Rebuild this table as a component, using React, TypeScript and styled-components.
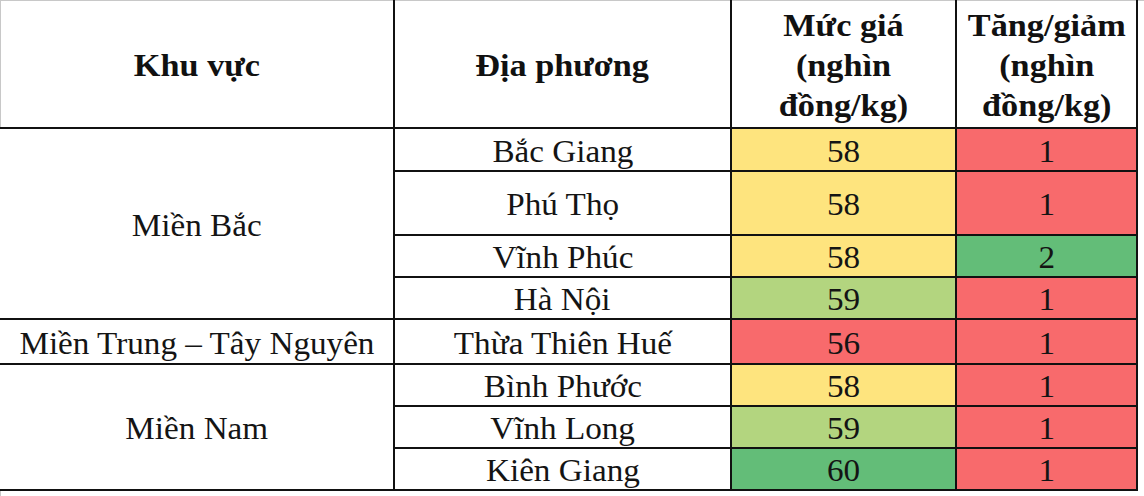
import React from "react";
import styled, { createGlobalStyle } from "styled-components";

const SERIF = `"Liberation Serif", "Times New Roman", "DejaVu Serif", serif`;

const Global = createGlobalStyle`
  html, body { margin: 0; padding: 0; background: #ffffff; }
  body { font-family: ${SERIF}; color: #111; }
`;

const Frame = styled.div`
  width: 1144px;
  height: 496px;
  background: #fff;
  box-sizing: border-box;
  border-top: 1px solid #c8c8c8;
  border-left: 1px solid #c8c8c8;
`;

const Table = styled.table`
  width: 1137px;
  border-collapse: collapse;
  table-layout: fixed;
  margin-top: -1px;
  margin-left: -1px;
  font-family: ${SERIF};
`;

const Head = styled.th<{ $first?: boolean }>`
  border: 2px solid #111;
  border-top: none;
  border-left: ${p => (p.$first ? "none" : "2px solid #111")};
  font-family: ${SERIF};
  font-weight: 700;
  font-size: 32px;
  line-height: 40px;
  text-align: center;
  vertical-align: middle;
  padding: 2px 0 0 0;
  height: 125px;
  color: #111;
`;

const Cell = styled.td<{ $bg?: string; $first?: boolean; $h?: number }>`
  border: 2px solid #111;
  border-left: ${p => (p.$first ? "none" : "2px solid #111")};
  background: ${p => p.$bg || "#fff"};
  font-family: ${SERIF};
  font-size: 31px;
  line-height: 36px;
  text-align: center;
  vertical-align: middle;
  padding: 4px 0 0 0;
  height: ${p => (p.$h ? p.$h - 6 : 37)}px;
  white-space: nowrap;
  color: #141414;
`;

const Wide = styled.span`
  display: inline-block;
  transform: scaleX(1.07);
  transform-origin: center;
`;

const YELLOW = "#fee47e";
const LGREEN = "#b3d57f";
const GREEN = "#63bd78";
const RED = "#f86a6c";

type Row = { region?: string; span?: number; place: string; price: number; priceBg: string; delta: number; deltaBg: string; h: number };

const rows: Row[] = [
  { region: "Miền Bắc", span: 4, place: "Bắc Giang", price: 58, priceBg: YELLOW, delta: 1, deltaBg: RED, h: 43 },
  { place: "Phú Thọ", price: 58, priceBg: YELLOW, delta: 1, deltaBg: RED, h: 64 },
  { place: "Vĩnh Phúc", price: 58, priceBg: YELLOW, delta: 2, deltaBg: GREEN, h: 42 },
  { place: "Hà Nội", price: 59, priceBg: LGREEN, delta: 1, deltaBg: RED, h: 42 },
  { region: "Miền Trung – Tây Nguyên", span: 1, place: "Thừa Thiên Huế", price: 56, priceBg: RED, delta: 1, deltaBg: RED, h: 45 },
  { region: "Miền Nam", span: 3, place: "Bình Phước", price: 58, priceBg: YELLOW, delta: 1, deltaBg: RED, h: 42 },
  { place: "Vĩnh Long", price: 59, priceBg: LGREEN, delta: 1, deltaBg: RED, h: 41 },
  { place: "Kiên Giang", price: 60, priceBg: GREEN, delta: 1, deltaBg: RED, h: 42 },
];

export default function App() {
  return (
    <>
      <Global />
      <Frame>
        <Table>
          <colgroup>
            <col style={{ width: 394 }} />
            <col style={{ width: 337 }} />
            <col style={{ width: 225 }} />
            <col style={{ width: 181 }} />
          </colgroup>
          <thead>
            <tr>
              <Head $first><Wide>Khu vực</Wide></Head>
              <Head><Wide>Địa phương</Wide></Head>
              <Head><Wide>Mức giá<br />(nghìn<br />đồng/kg)</Wide></Head>
              <Head><Wide>Tăng/giảm<br />(nghìn<br />đồng/kg)</Wide></Head>
            </tr>
          </thead>
          <tbody>
            {rows.map((r, i) => (
              <tr key={i}>
                {r.region && (
                  <Cell $first rowSpan={r.span} $h={r.span === 1 ? r.h : undefined}>
                    <Wide>{r.region}</Wide>
                  </Cell>
                )}
                <Cell $h={r.h}><Wide>{r.place}</Wide></Cell>
                <Cell $h={r.h} $bg={r.priceBg}><Wide>{r.price}</Wide></Cell>
                <Cell $h={r.h} $bg={r.deltaBg}><Wide>{r.delta}</Wide></Cell>
              </tr>
            ))}
          </tbody>
        </Table>
      </Frame>
    </>
  );
}
